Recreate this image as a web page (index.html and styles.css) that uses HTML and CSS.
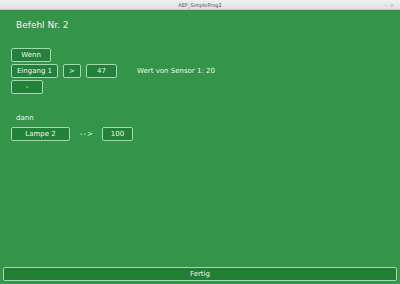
FILE: index.html
```html
<!DOCTYPE html>
<html lang="de">
<head>
  <meta charset="UTF-8" />
  <title>AEP_SimpleProg2</title>
  <link rel="stylesheet" href="styles.css">
</head>
<body>
  <!-- Window title bar -->
  <div class="titlebar">
    <span class="titlebar-name">AEP_SimpleProg2</span>
    <span class="titlebar-ctrl">&ndash;&nbsp;&nbsp;&times;</span>
  </div>

  <div class="main">
    <div class="heading">Befehl Nr. 2</div>

    <!-- Condition -->
    <div class="block cond">
      <div class="row"><button class="btn w-wenn">Wenn</button></div>
      <div class="row">
        <button class="btn w-input">Eingang 1</button>
        <button class="btn w-op">&gt;</button>
        <button class="btn w-val">47</button>
        <span class="info">Wert von Sensor 1: 20</span>
      </div>
      <div class="row"><button class="btn w-minus">-</button></div>
    </div>

    <!-- Action -->
    <div class="block action">
      <div class="label">dann</div>
      <div class="row">
        <button class="btn w-out">Lampe 2</button>
        <span class="arrow">--&gt;</span>
        <button class="btn w-val">100</button>
      </div>
    </div>

    <div class="footer">
      <button class="btn btn-done">Fertig</button>
    </div>
  </div>
</body>
</html>
```

FILE: styles.css
```css
body {
  margin: 0;
  padding: 0;
  font-family: "DejaVu Sans", sans-serif;
  color: #f2f2f2;
  overflow: hidden;
}

.titlebar {
  height: 10px;
  background: linear-gradient(#f0f0f0, #e0e0e0);
  border-bottom: 1px solid #c8c8c8;
  box-sizing: border-box;
  position: relative;
  text-align: center;
  font-size: 5px;
  line-height: 10px;
  color: #555;
}

.titlebar-ctrl {
  position: absolute;
  right: 6px;
  top: 0;
  color: #aaa;
}

.main {
  height: 274px;
  background: #33944a;
  display: flex;
  flex-direction: column;
  box-sizing: border-box;
  padding: 10px 3px 3px 3px;
}

.heading {
  padding-left: 13px;
  font-size: 9px;
  line-height: 11px;
}

.block {
  padding-left: 8px;
  display: flex;
  flex-direction: column;
  gap: 2px;
}

.cond {
  margin-top: 17px;
}

.action {
  margin-top: 19px;
  gap: 4px;
}

.row {
  display: flex;
  align-items: center;
  gap: 5px;
}

.btn {
  height: 14px;
  padding: 0;
  margin: 0;
  background: #22823a;
  border: 1px solid #a9d6b2;
  border-radius: 2px;
  color: #f2f2f2;
  font-family: "DejaVu Sans", sans-serif;
  font-size: 7px;
  line-height: 12px;
  box-sizing: border-box;
}

.w-wenn { width: 40px; }
.w-input { width: 47px; }
.w-op { width: 18px; }
.w-val { width: 31px; }
.w-minus { width: 32px; }
.w-out { width: 59px; }

.info {
  margin-left: 15px;
  font-size: 7px;
}

.label {
  padding-left: 5px;
  font-size: 7px;
  line-height: 10px;
}

.arrow {
  font-size: 7px;
  letter-spacing: 1px;
  margin: 0 3px 0 5px;
}

.footer {
  margin-top: auto;
}

.btn-done {
  width: 100%;
  height: 14px;
  background: #1f7f33;
}
```
